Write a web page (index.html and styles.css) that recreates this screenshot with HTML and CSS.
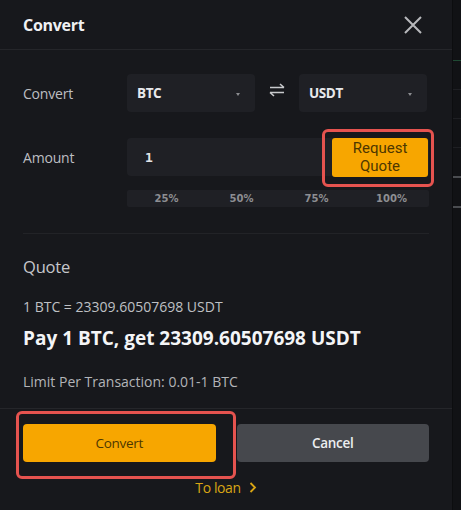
FILE: index.html
```html
<!DOCTYPE html>
<html lang="en">
<head>
<meta charset="UTF-8">
<meta name="viewport" content="width=device-width, initial-scale=1.0">
<title>Convert</title>
<link rel="stylesheet" href="styles.css">
</head>
<body>

<div class="page">
  <div class="modal">
    <div class="modal-header">
      <h2 class="modal-title">Convert</h2>
      <svg class="close" width="18" height="18" viewBox="0 0 18 18">
        <path d="M1 1 L17 17 M17 1 L1 17" stroke="#b8b9bc" stroke-width="2" fill="none"/>
      </svg>
    </div>

    <div class="modal-body">
      <div class="row">
        <span class="label">Convert</span>
        <div class="select">
          <span>BTC</span>
          <span class="caret"></span>
        </div>
        <div class="swap">
          <svg width="16" height="14" viewBox="0 0 16 14">
            <path d="M1 4.5 H15 M11 1 L15 4.5 M15 9.5 H1 M5 13 L1 9.5" stroke="#c8c9cc" stroke-width="1.6" fill="none"/>
          </svg>
        </div>
        <div class="select">
          <span>USDT</span>
          <span class="caret"></span>
        </div>
      </div>

      <div class="row row-amount">
        <span class="label">Amount</span>
        <div class="amount-box">
          <span class="amount-value">1</span>
          <button class="quote-btn">Request<br>Quote</button>
        </div>
      </div>

      <div class="percent-row">
        <span>25%</span>
        <span>50%</span>
        <span>75%</span>
        <span>100%</span>
      </div>

      <div class="divider"></div>

      <div class="quote-title">Quote</div>
      <div class="rate">1 BTC = 23309.60507698 USDT</div>
      <div class="pay">Pay 1 BTC, get 23309.60507698 USDT</div>
      <div class="limit">Limit Per Transaction: 0.01-1 BTC</div>
    </div>

    <div class="modal-footer">
      <div class="buttons">
        <button class="btn btn-convert">Convert</button>
        <button class="btn btn-cancel">Cancel</button>
      </div>
      <a class="to-loan" href="#">To loan
        <svg width="8" height="11" viewBox="0 0 8 11"><path d="M1.5 1 L6 5.5 L1.5 10" stroke="#d9a514" stroke-width="1.8" fill="none"/></svg>
      </a>
    </div>

    <!-- red highlight marks drawn over the screenshot -->
    <div class="mark mark-quote"></div>
    <div class="mark mark-convert"></div>
  </div>

  <div class="side">
    <div class="side-line green"></div>
    <div class="side-line"></div>
    <div class="side-line"></div>
    <div class="side-line"></div>
    <div class="side-line light"></div>
    <div class="side-line light"></div>
  </div>
</div>

</body>
</html>
```

FILE: styles.css
```css
body {
  margin: 0;
  background-color: #111215;
  font-family: "Open Sans", "Liberation Sans", sans-serif;
  color: #eaecef;
}

.page {
  display: flex;
  width: 461px;
  height: 510px;
  overflow: hidden;
}

.modal {
  position: relative;
  width: 452px;
  height: 510px;
  background-color: #17181c;
  display: flex;
  flex-direction: column;
}

.modal-header {
  height: 50px;
  border-bottom: 1px solid #25262a;
  display: flex;
  align-items: center;
  justify-content: space-between;
  padding: 0 30px 0 23px;
  box-sizing: border-box;
}

.modal-title {
  margin: 0;
  font-size: 16px;
  font-weight: 700;
  color: #f0f1f3;
  letter-spacing: -0.3px;
}

.modal-body {
  padding: 24px 23px 0 23px;
}

.row {
  display: flex;
  align-items: center;
  height: 38px;
}

.label {
  width: 104px;
  font-size: 14px;
  color: #bdbec2;
  letter-spacing: -0.2px;
}

.select {
  width: 128px;
  height: 38px;
  box-sizing: border-box;
  background-color: #1f2025;
  border-radius: 4px;
  display: flex;
  align-items: center;
  justify-content: space-between;
  padding: 0 15px 0 10px;
  font-size: 13.5px;
  font-weight: 700;
  color: #e8e9ec;
  letter-spacing: -0.4px;
}

.caret {
  width: 0;
  height: 0;
  border-left: 2px solid transparent;
  border-right: 2px solid transparent;
  border-top: 3px solid #8b8c90;
  margin-top: 2px;
}

.swap {
  width: 44px;
  display: flex;
  justify-content: center;
  margin-top: -6px;
}

.row-amount {
  margin-top: 26px;
}

.amount-box {
  flex: 1;
  height: 38px;
  background-color: #1f2025;
  border-radius: 4px;
  display: flex;
  align-items: center;
  justify-content: space-between;
  padding-left: 18px;
}

.amount-value {
  font-family: "DejaVu Sans Mono", monospace;
  font-weight: 700;
  font-size: 13px;
  color: #e3e4e7;
}

.quote-btn {
  width: 96px;
  height: 39px;
  margin-right: 1px;
  border: none;
  border-radius: 3px;
  background-color: #f7a600;
  color: #4d3700;
  font-family: Roboto, "Liberation Sans", sans-serif;
  font-size: 15px;
  line-height: 18px;
  padding: 0;
}

.percent-row {
  margin: 14px 0 0 104px;
  height: 17px;
  background-color: #1f2025;
  border-radius: 2px;
  display: grid;
  grid-template-columns: repeat(4, 1fr);
  align-items: center;
  text-align: center;
  font-family: "DejaVu Sans", sans-serif;
  font-size: 10px;
  font-weight: 700;
  color: #8d8e92;
  padding-left: 2px;
}

.divider {
  margin-top: 26px;
  height: 1px;
  background-color: #222327;
}

.quote-title {
  margin-top: 23px;
  font-size: 16.5px;
  color: #c6c7cb;
  line-height: 20px;
  letter-spacing: -0.2px;
}

.rate {
  margin-top: 21px;
  font-size: 14px;
  color: #bfc0c4;
  line-height: 18px;
}

.pay {
  margin-top: 10px;
  font-size: 19px;
  font-weight: 700;
  color: #f4f5f7;
  line-height: 24px;
}

.limit {
  margin-top: 23px;
  font-size: 14px;
  color: #b3b4b8;
  line-height: 18px;
}

.modal-footer {
  margin-top: 17px;
  border-top: 1px solid #25262a;
  padding: 15px 23px 0 23px;
}

.buttons {
  display: flex;
  gap: 21px;
}

.btn {
  flex: 1;
  height: 38px;
  border: none;
  border-radius: 4px;
  font-family: "Open Sans", "Liberation Sans", sans-serif;
  font-size: 13.5px;
  letter-spacing: -0.3px;
}

.btn-convert {
  background-color: #f7a600;
  color: #4d3700;
}

.btn-cancel {
  background-color: #46484d;
  color: #eceef0;
  font-weight: 600;
}

.to-loan {
  display: flex;
  align-items: center;
  justify-content: center;
  gap: 8px;
  margin-top: 16px;
  font-size: 14px;
  line-height: 19px;
  color: #d9a514;
  text-decoration: none;
  letter-spacing: -0.4px;
}

.mark {
  position: absolute;
  border: 3px solid #e5534f;
  border-radius: 6px;
  box-sizing: border-box;
}

.mark-quote {
  left: 322px;
  top: 129px;
  width: 112px;
  height: 58px;
}

.mark-convert {
  left: 16px;
  top: 411px;
  width: 220px;
  height: 68px;
}

.side {
  flex: 1;
  background-color: #111215;
  border-left: 1px solid #0c0d0f;
  display: flex;
  flex-direction: column;
  padding-top: 42px;
  gap: 28px;
}

.side-line {
  height: 1px;
  background-color: #1e1f23;
}

.side-line.green {
  background-color: #1f4a33;
  margin-top: 18px;
}

.side-line.light {
  background-color: #4a4c50;
  height: 2px;
}
```
